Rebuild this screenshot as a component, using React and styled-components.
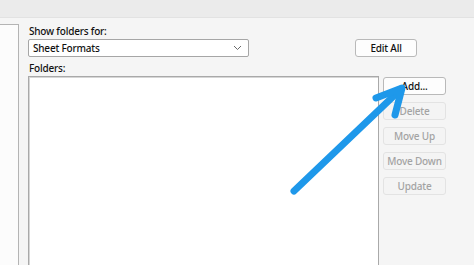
import React from "react";
import styled, { createGlobalStyle } from "styled-components";

const GlobalStyle = createGlobalStyle`
  html, body {
    margin: 0;
    padding: 0;
    background: #f5f5f5;
  }
  body {
    font-family: "Noto Sans", "Open Sans", sans-serif;
    font-size: 10px;
    letter-spacing: -0.2px;
    color: #111;
  }
`;

function App() {
  return (
    <StyledPage>
      <GlobalStyle />
      <TopBar />
      <Content>
        <SidePanel />
        <Main>
          <Label>Show folders for:</Label>
          <SelectRow>
            <Select>
              <span>Sheet Formats</span>
              <svg width="9" height="6" viewBox="0 0 9 6">
                <path d="M1 1 L4.5 4.5 L8 1" fill="none" stroke="#6a6a6a" strokeWidth="1" />
              </svg>
            </Select>
            <Button $wide>Edit All</Button>
          </SelectRow>
          <Label $gap>Folders:</Label>
          <ListRow>
            <ListBox />
            <ButtonColumn>
              <Button>Add...</Button>
              <Button disabled>Delete</Button>
              <Button disabled>Move Up</Button>
              <Button disabled>Move Down</Button>
              <Button disabled>Update</Button>
            </ButtonColumn>
          </ListRow>
        </Main>
      </Content>
      <Arrow width="474" height="265" viewBox="0 0 474 265">
        <g fill="none" stroke="#1e98ea" strokeWidth="7" strokeLinecap="round" strokeLinejoin="round">
          <path d="M294 191 L401 89" />
          <path d="M376 98 L402 88 L395 115" />
        </g>
      </Arrow>
    </StyledPage>
  );
}

export default App;

const StyledPage = styled.div`
  position: relative;
  width: 474px;
  height: 265px;
  overflow: hidden;
  background: #f5f5f5;
`;

const TopBar = styled.div`
  height: 17px;
  background: #ebebeb;
  border-bottom: 1px solid #e2e2e2;
`;

const Content = styled.div`
  display: flex;
  height: 247px;
`;

const SidePanel = styled.div`
  width: 18px;
  margin-top: 6px;
  background: #fcfcfc;
  border-top: 1px solid #b4b4b4;
  border-right: 1px solid #b4b4b4;
`;

const Main = styled.div`
  flex: 1;
  display: flex;
  flex-direction: column;
  padding: 6px 0 0 9px;
`;

const Label = styled.div`
  height: 15px;
  line-height: 15px;
  padding-left: 1px;
  margin-top: ${(p) => (p.$gap ? "4px" : "0")};
  font-weight: 500;
  color: #111;
`;

const SelectRow = styled.div`
  display: flex;
  align-items: center;
  height: 18px;
`;

const Select = styled.div`
  box-sizing: border-box;
  width: 221px;
  height: 18px;
  display: flex;
  align-items: center;
  justify-content: space-between;
  padding: 0 6px 0 4px;
  background: #ffffff;
  border: 1px solid #a6a6a6;
  border-radius: 2px;
  font-weight: 500;
  color: #111;
`;

const Button = styled.button`
  box-sizing: border-box;
  width: ${(p) => (p.$wide ? "62px" : "63px")};
  height: 18px;
  margin-left: ${(p) => (p.$wide ? "106px" : "0")};
  padding: 0;
  font-family: inherit;
  font-size: 10px;
  letter-spacing: -0.2px;
  font-weight: 500;
  line-height: 16px;
  color: ${(p) => (p.disabled ? "#a3a3a3" : "#111")};
  background: ${(p) => (p.disabled ? "#f4f4f4" : "#fdfdfd")};
  border: 1px solid ${(p) => (p.disabled ? "#e3e3e3" : "#b9b9b9")};
  border-radius: 3px;
`;

const ListRow = styled.div`
  display: flex;
  flex: 1;
`;

const ListBox = styled.div`
  box-sizing: border-box;
  width: 351px;
  background: #ffffff;
  border: 1px solid #a9a9a9;
  border-bottom: none;
  box-shadow: inset 1px 1px 0 #d6d6d6;
`;

const ButtonColumn = styled.div`
  display: flex;
  flex-direction: column;
  gap: 7px;
  padding: 1px 0 0 4px;
`;

const Arrow = styled.svg`
  position: absolute;
  left: 0;
  top: 0;
  pointer-events: none;
`;
